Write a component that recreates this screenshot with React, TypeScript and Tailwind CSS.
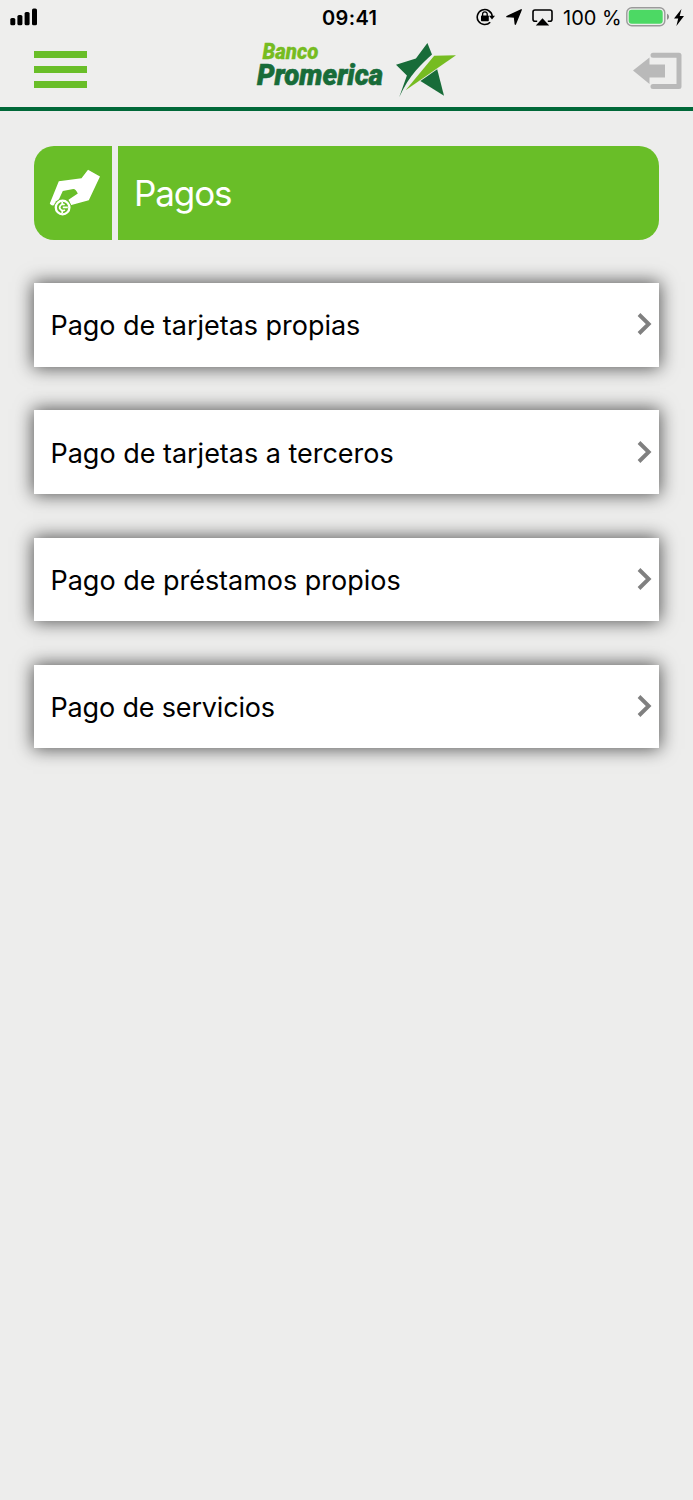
const options = [
  { label: 'Pago de tarjetas propias', tracking: 'tracking-[-0.03px]' },
  { label: 'Pago de tarjetas a terceros', tracking: 'tracking-[-0.02px]' },
  { label: 'Pago de préstamos propios', tracking: 'tracking-[-0.02px]' },
  { label: 'Pago de servicios', tracking: 'tracking-[-0.17px]' },
];

function SignalIcon() {
  return (
    <svg width="28" height="18" viewBox="0 0 28 18">
      <rect x="0.3" y="10" width="5" height="7.3" rx="1.6" />
      <rect x="7.4" y="7" width="5" height="10.3" rx="1.6" />
      <rect x="14.6" y="4" width="5" height="13.3" rx="1.6" />
      <rect x="22" y="0.6" width="5" height="16.7" rx="1.6" />
    </svg>
  );
}

function RotationLockIcon() {
  return (
    <svg width="19" height="18" viewBox="0 0 19 18" fill="none" stroke="#000">
      <path d="M14.2 14.2A7.5 7.5 0 1 1 16.2 8.3" strokeWidth="1.6" />
      <path d="M13 7.8h6l-3 3.8z" fill="#000" stroke="none" />
      <rect x="5" y="7.6" width="7.8" height="5.6" rx="0.7" fill="#000" stroke="none" />
      <path d="M6.6 8.2V6.1a2.3 2.3 0 0 1 4.6 0v2.1" strokeWidth="1.3" />
    </svg>
  );
}

function LocationIcon() {
  return (
    <svg width="16" height="16" viewBox="0 0 16 16">
      <path d="M15.2 0.8 9.3 15.2 8.5 8.1 0.9 7.6z" stroke="#000" strokeWidth="1.4" strokeLinejoin="round" />
    </svg>
  );
}

function AirPlayIcon() {
  return (
    <svg width="21" height="17" viewBox="0 0 21 17" fill="none">
      <path d="M5.2 12.2H3A2 2 0 0 1 1 10.2V3a2 2 0 0 1 2-2h15a2 2 0 0 1 2 2v7.2a2 2 0 0 1-2 2h-2.2" stroke="#000" strokeWidth="1.6" />
      <path d="M10.5 9.2 17.2 16.6H3.8z" fill="#000" />
    </svg>
  );
}

function BatteryIcon() {
  return (
    <svg width="44" height="20" viewBox="0 0 44 20">
      <rect x="0.8" y="0.8" width="38" height="18" rx="5" fill="none" stroke="#9a9a9a" strokeWidth="1.4" />
      <rect x="2.7" y="2.8" width="34" height="14" rx="3" fill="#4cd964" />
      <path d="M41 6.8c2.7.9 2.7 5.1 0 6z" fill="#8c8c8c" />
    </svg>
  );
}

function BoltIcon() {
  return (
    <svg width="10" height="17" viewBox="0 0 10 17">
      <path d="M7.5 0 0 9.5h4.2L2.4 17 10 7H5.7z" />
    </svg>
  );
}

function StatusBar() {
  return (
    <div className="grid h-[34px] grid-cols-[322px_1fr_auto] items-center pl-[10px] pr-[9px] text-black">
      <SignalIcon />
      <span className="-ml-[10px] pt-px text-[20px] font-semibold leading-none tracking-[0.35px]">09:41</span>
      <div className="flex items-center">
        <RotationLockIcon />
        <span className="ml-[11px]"><LocationIcon /></span>
        <span className="ml-[10px]"><AirPlayIcon /></span>
        <span className="ml-[10px] w-[63px] whitespace-nowrap pt-px text-[20px] leading-none">100 %</span>
        <BatteryIcon />
        <span className="ml-[4px]"><BoltIcon /></span>
      </div>
    </div>
  );
}

function Logo() {
  return (
    <svg width="204" height="60" viewBox="0 0 204 60">
      <g fontFamily="Roboto, 'Liberation Sans', sans-serif" fontWeight="900" fontStyle="italic">
        <text x="7.5" y="19.3" fontSize="21.5" fill="#76bc21" stroke="#76bc21" strokeWidth="0.3" textLength="56" lengthAdjust="spacingAndGlyphs">Banco</text>
        <text x="2" y="45" fontSize="29.5" fill="#186c39" stroke="#186c39" strokeWidth="0.6" textLength="126" lengthAdjust="spacingAndGlyphs">Promerica</text>
      </g>
      <path d="M172.4 3 177 14.5C168 22.5 154 35 144.2 57.3L151.9 35.5 141 24.7 160.9 18.4z" fill="#186c39" />
      <path d="M179.2 15.8 201 15.3 150.6 50.2z" fill="#76bc21" />
      <path d="M182.2 29.2 189 55.7 165.4 40.9z" fill="#186c39" />
    </svg>
  );
}

function ExitIcon() {
  return (
    <svg width="49" height="38" viewBox="0 0 49 38">
      <path d="M20 3.3h26v31.2H20" fill="none" stroke="#b9b9b9" strokeWidth="5" strokeLinecap="round" strokeLinejoin="round" />
      <path d="M0 18.5 16.5 5.5v7H32v13H16.5V32z" fill="#b9b9b9" />
    </svg>
  );
}

function Header() {
  return (
    <div className="flex h-[77px] items-start border-b-[4px] border-[#006838] pl-[34px] pr-[11px]">
      <button aria-label="Menú" className="mt-[17px] flex w-[53px] flex-col gap-[8px]">
        <span className="h-[7px] w-full bg-[#69be28]" />
        <span className="h-[7px] w-full bg-[#69be28]" />
        <span className="h-[7px] w-full bg-[#69be28]" />
      </button>
      <div className="ml-[168px] mt-[6px]"><Logo /></div>
      <button aria-label="Salir" className="ml-auto mt-[17.5px]"><ExitIcon /></button>
    </div>
  );
}

function PaymentIcon() {
  return (
    <svg width="52" height="48" viewBox="0 0 52 48" className="ml-[3px]">
      <path
        d="M9.8 12.3 32.5 9.3 39 .8 51 7.6 39.8 31.3 21.5 36.3 19.5 30.8 28.8 24.6Q27 20 24.3 19.9L13.8 21.9 8 34.5Q3 38.5.8 34.5z"
        fill="#fff"
      />
      <circle cx="13.6" cy="38.5" r="9" fill="#69be28" />
      <circle cx="13.6" cy="38.5" r="6.8" fill="none" stroke="#fff" strokeWidth="2.3" />
      <path d="M15.6 35.9a3.1 3.1 0 1 0 .3 4.9M13.2 33v3.2M13.2 41v3M13.8 38.4h5" fill="none" stroke="#fff" strokeWidth="1.7" />
    </svg>
  );
}

function OptionCard({ label, tracking }: { label: string; tracking: string }) {
  return (
    <button className="flex h-[83.6px] w-full items-center justify-between bg-white pl-[16.5px] pr-[7px] shadow-[0_0_17px_1px_rgba(0,0,0,0.66)]">
      <span className={`pt-[2px] text-[27px] leading-none text-black ${tracking}`}>{label}</span>
      <svg width="15" height="22" viewBox="0 0 15 22" className="mb-px">
        <path d="M2 1.5 11.7 11 2 20.5" fill="none" stroke="#808080" strokeWidth="3.9" />
      </svg>
    </button>
  );
}

export default function App() {
  return (
    <div className="min-h-[1500px] w-full overflow-hidden bg-[#ededec] font-['Inter','Liberation_Sans',sans-serif]">
      <header className="bg-[#eeeeed]">
        <StatusBar />
        <Header />
      </header>

      <main className="px-[34px] pt-[35px]">
        <div className="flex h-[93.5px] gap-[6px] overflow-hidden rounded-[20px]">
          <div className="flex w-[78px] items-center justify-center bg-[#69be28]">
            <PaymentIcon />
          </div>
          <h1 className="flex flex-1 items-center bg-[#69be28] pl-[16px] pt-[2px] text-[35px] leading-none tracking-[-1.1px] text-white">Pagos</h1>
        </div>

        <div className="mt-[43.5px] flex flex-col gap-[43.7px]">
          {options.map((option) => (
            <OptionCard key={option.label} label={option.label} tracking={option.tracking} />
          ))}
        </div>
      </main>
    </div>
  );
}
